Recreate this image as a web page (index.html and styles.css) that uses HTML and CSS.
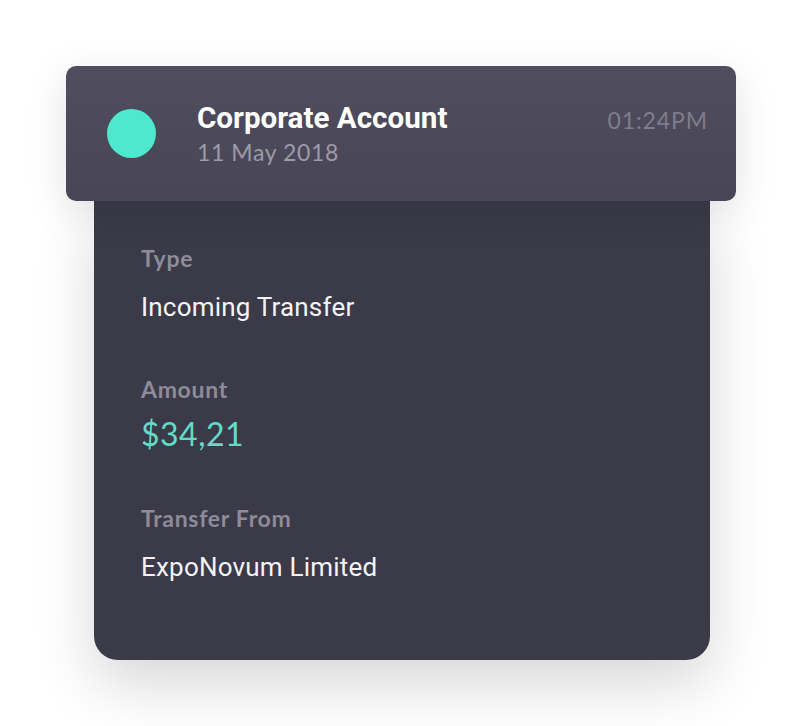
FILE: index.html
```html
<!DOCTYPE html>
<html>
<head>
<meta charset="utf-8">
<link rel="stylesheet" href="styles.css">
</head>
<body>
<div class="card">
  <div class="header">
    <div class="dot"></div>
    <div class="head-text">
      <div class="title">Corporate Account</div>
      <div class="date">11 May 2018</div>
    </div>
    <div class="time">01:24PM</div>
  </div>
  <div class="body">
    <div class="field">
      <div class="label">Type</div>
      <div class="value">Incoming Transfer</div>
    </div>
    <div class="field">
      <div class="label">Amount</div>
      <div class="value amount">$34,21</div>
    </div>
    <div class="field">
      <div class="label">Transfer From</div>
      <div class="value">ExpoNovum Limited</div>
    </div>
  </div>
</div>
</body>
</html>
```

FILE: styles.css
```css
html, body {
  margin: 0;
  padding: 0;
  background: #ffffff;
}
body {
  width: 802px;
  height: 726px;
  overflow: hidden;
}
.card {
  margin: 66px 0 0 66px;
  width: 670px;
  display: flex;
  flex-direction: column;
  align-items: flex-start;
}
.header {
  width: 670px;
  height: 135px;
  box-sizing: border-box;
  border-radius: 10px;
  background: linear-gradient(180deg, #4f4d5e 0%, #484656 100%);
  display: flex;
  align-items: flex-start;
  padding: 35px 28px 0 41px;
  position: relative;
  z-index: 2;
  box-shadow: 0 10px 40px rgba(0, 0, 0, 0.12);
}
.dot {
  width: 49px;
  height: 49px;
  border-radius: 50%;
  background: #4de8cd;
  flex: none;
  margin-top: 8px;
}
.head-text {
  margin-left: 41px;
  flex: 1;
}
.title {
  font-family: Roboto, "Liberation Sans", sans-serif;
  font-weight: 700;
  font-size: 29.6px;
  line-height: 35px;
  color: #ffffff;
}
.date {
  font-family: Lato, "Liberation Sans", sans-serif;
  font-size: 23px;
  line-height: 28px;
  letter-spacing: 0.6px;
  color: #9d9ba8;
  margin-top: 2px;
}
.time {
  font-family: Lato, "Liberation Sans", sans-serif;
  font-size: 23px;
  line-height: 28px;
  letter-spacing: 0.9px;
  color: #7f7d8b;
  margin-top: 5px;
}
.body {
  width: 616px;
  height: 459px;
  margin-left: 28px;
  box-sizing: border-box;
  background: #3b3a48;
  border-radius: 0 0 24px 24px;
  padding: 43px 47px 0;
  box-shadow: 0 24px 60px rgba(0, 0, 0, 0.16);
  display: flex;
  flex-direction: column;
  gap: 52px;
}
.field {
  display: flex;
  flex-direction: column;
}
.label {
  font-family: Lato, "Liberation Sans", sans-serif;
  font-weight: 700;
  font-size: 23px;
  line-height: 28px;
  letter-spacing: 0.7px;
  color: #8e8c98;
}
.value {
  font-family: Roboto, "Liberation Sans", sans-serif;
  font-size: 26px;
  line-height: 32px;
  letter-spacing: 0.2px;
  color: #f4f4f8;
  margin-top: 19px;
}
.value.amount {
  font-family: Lato, "Liberation Sans", sans-serif;
  font-size: 32px;
  line-height: 37px;
  letter-spacing: 0.5px;
  color: #62dcc6;
  margin-top: 12px;
}
```
